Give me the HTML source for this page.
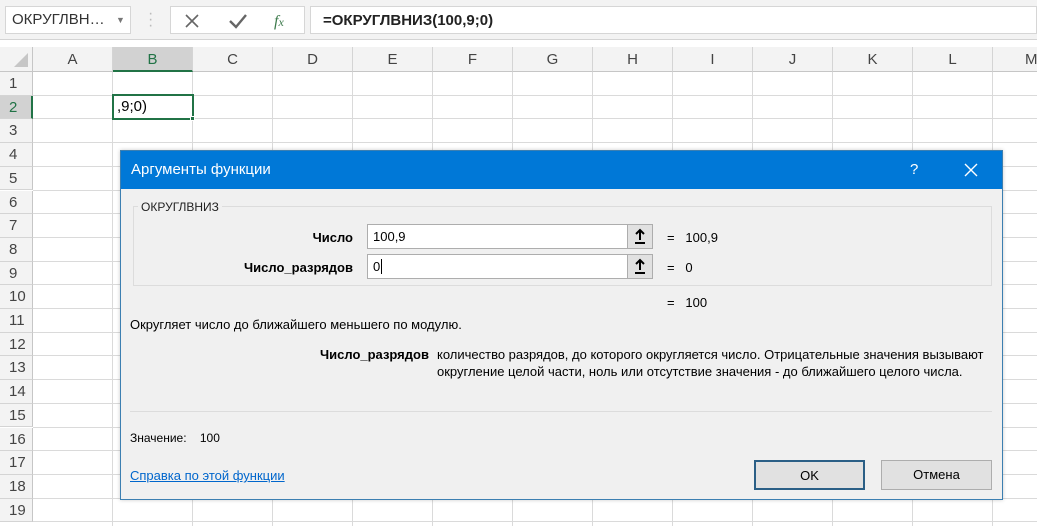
<!DOCTYPE html>
<html><head><meta charset="utf-8"><style>
*{box-sizing:border-box;margin:0;padding:0}
body{width:1037px;height:526px;overflow:hidden;background:#fff;font-family:"Liberation Sans","DejaVu Sans",sans-serif;position:relative;font-size:13px;color:#000}
.abs{position:absolute}
.tb{left:0;top:0;width:1037px;height:40px;background:#f3f3f3;border-bottom:1px solid #d4d4d4}
.box{background:#fff;border:1px solid #d6d6d6}
.colh{top:47px;height:25px;background:#f3f3f3;border-bottom:1px solid #c6c6c6;border-right:1px solid #d4d4d4;text-align:center;line-height:25px;font-size:15px;color:#444}
.rowh{left:0;width:33px;background:#f3f3f3;border-bottom:1px solid #d4d4d4;border-right:1px solid #c6c6c6;padding-left:9px;font-size:15px;color:#444}
.vl{top:72px;width:1px;height:454px;background:#dadada}
.hl{left:33px;width:1004px;height:1px;background:#dadada}
.dlg{left:120px;top:150px;width:883px;height:350px;background:#f0f0f0;border:1px solid #3c7fb1;box-shadow:0 0 4px rgba(0,0,0,.2)}
.ttl{left:0;top:0;width:881px;height:38px;background:#0078d7;color:#fff;font-size:15px;line-height:38px;padding-left:10px}
.inp{background:#fff;border:1px solid #adadad;height:25px;font-size:13px;line-height:23px;padding-left:5px}
.arr{width:26px;height:25px;background:#e1e1e1;border:1px solid #adadad}
.btn{height:30px;background:#e1e1e1;border:1px solid #adadad;text-align:center;line-height:28px;font-size:13px}
</style></head><body>
<div class="abs tb"></div>
<div class="abs box" style="left:5px;top:6px;width:126px;height:28px;font-size:15px;line-height:26px;padding-left:6px;color:#333">ОКРУГЛВН…<span style="position:absolute;left:110px;font-size:9px;color:#777">▼</span></div>
<div class="abs" style="left:148px;top:11px;color:#bbb;font-size:16px;line-height:6px">·<br>·<br>·</div>
<div class="abs box" style="left:170px;top:6px;width:135px;height:28px"></div>
<svg class="abs" style="left:182px;top:11px" width="120" height="20"><path d="M4 4L16 16M16 4L4 16" stroke="#666" stroke-width="1.6"/><path d="M48 10L54 16L64 4" stroke="#666" stroke-width="2.4" fill="none"/><text x="92" y="15" font-family="Liberation Serif" font-style="italic" font-size="16" fill="#3c7a4b">f<tspan font-size="12">x</tspan></text></svg>
<div class="abs box" style="left:310px;top:6px;width:727px;height:28px;font-size:15px;font-weight:bold;line-height:28px;padding-left:12px;color:#222">=ОКРУГЛВНИЗ(100,9;0)</div>
<div class="abs" style="left:0;top:47px;width:33px;height:25px;background:#f3f3f3;border-right:1px solid #c6c6c6;border-bottom:1px solid #c6c6c6"><svg width="32" height="24"><path d="M28 6L28 20L14 20Z" fill="#c6c6c6"/></svg></div>
<div class="abs colh" style="left:33px;width:80px">A</div>
<div class="abs colh" style="left:113px;width:80px;background:#d2d2d2;border-bottom:2px solid #217346;color:#217346">B</div>
<div class="abs colh" style="left:193px;width:80px">C</div>
<div class="abs colh" style="left:273px;width:80px">D</div>
<div class="abs colh" style="left:353px;width:80px">E</div>
<div class="abs colh" style="left:433px;width:80px">F</div>
<div class="abs colh" style="left:513px;width:80px">G</div>
<div class="abs colh" style="left:593px;width:80px">H</div>
<div class="abs colh" style="left:673px;width:80px">I</div>
<div class="abs colh" style="left:753px;width:80px">J</div>
<div class="abs colh" style="left:833px;width:80px">K</div>
<div class="abs colh" style="left:913px;width:80px">L</div>
<div class="abs colh" style="left:993px;width:80px;text-align:left;padding-left:32px">M</div>
<div id="grid"></div>
<script>
var g='';for(var i=1;i<=19;i++){var t=72+(i-1)*23.7;g+='<div class="abs rowh" style="top:'+t+'px;height:23.7px;line-height:23.7px;'+(i==2?'background:#d2d2d2;color:#217346;border-right:2px solid #217346':'')+'">'+i+'</div><div class="abs hl" style="top:'+(t+22.7)+'px"></div>';}
for(var c=0;c<13;c++)g+='<div class="abs vl" style="left:'+(112+c*80)+'px"></div>';
document.getElementById('grid').innerHTML=g;
</script>
<div class="abs" style="left:112px;top:94px;width:82px;height:26px;border:2px solid #217346;font-size:15px;line-height:22px;padding-left:3px;background:#fff">,9;0)</div>
<div class="abs" style="left:190px;top:116px;width:5px;height:5px;background:#217346;border:1px solid #fff"></div>
<div class="abs dlg">
<div class="abs ttl">Аргументы функции</div>
<div class="abs" style="left:789px;top:10px;color:#fff;font-size:15px">?</div>
<svg class="abs" style="left:843px;top:12px" width="14" height="14"><path d="M1 1L13 13M13 1L1 13" stroke="#fff" stroke-width="1.4"/></svg>
<div class="abs" style="left:12px;top:55px;width:859px;height:80px;border:1px solid #dcdcdc"></div>
<div class="abs" style="left:17px;top:49px;background:#f0f0f0;padding:0 3px;font-size:12px;color:#222">ОКРУГЛВНИЗ</div>
<div class="abs" style="left:100px;top:79px;width:132px;text-align:right;font-weight:bold">Число</div>
<div class="abs inp" style="left:246px;top:73px;width:261px">100,9</div>
<div class="abs arr" style="left:506px;top:73px"><svg width="24" height="23"><path d="M12 5L12 15M8 9L12 5L16 9" stroke="#000" stroke-width="2" fill="none"/><path d="M7 18H17" stroke="#000" stroke-width="2"/></svg></div>
<div class="abs" style="left:546px;top:79px">=&nbsp;&nbsp;&nbsp;100,9</div>
<div class="abs" style="left:80px;top:109px;width:152px;text-align:right;font-weight:bold">Число_разрядов</div>
<div class="abs inp" style="left:246px;top:103px;width:261px">0<span style="border-left:1px solid #000;margin-left:1px"></span></div>
<div class="abs arr" style="left:506px;top:103px"><svg width="24" height="23"><path d="M12 5L12 15M8 9L12 5L16 9" stroke="#000" stroke-width="2" fill="none"/><path d="M7 18H17" stroke="#000" stroke-width="2"/></svg></div>
<div class="abs" style="left:546px;top:109px">=&nbsp;&nbsp;&nbsp;0</div>
<div class="abs" style="left:546px;top:144px">=&nbsp;&nbsp;&nbsp;100</div>
<div class="abs" style="left:9px;top:166px">Округляет число до ближайшего меньшего по модулю.</div>
<div class="abs" style="left:199px;top:196px;font-weight:bold">Число_разрядов</div>
<div class="abs" style="left:316px;top:195px;line-height:17px;width:560px">количество разрядов, до которого округляется число. Отрицательные значения вызывают округление целой части, ноль или отсутствие значения - до ближайшего целого числа.</div>
<div class="abs" style="left:9px;top:260px;width:862px;height:1px;background:#dcdcdc"></div>
<div class="abs" style="left:9px;top:280px;font-size:12px">Значение:&nbsp;&nbsp;&nbsp;&nbsp;100</div>
<div class="abs" style="left:9px;top:317px;color:#0066cc;text-decoration:underline">Справка по этой функции</div>
<div class="abs btn" style="left:633px;top:309px;width:111px;border:2px solid #2b5f86">OK</div>
<div class="abs btn" style="left:760px;top:309px;width:111px">Отмена</div>
</div>
</body></html>
